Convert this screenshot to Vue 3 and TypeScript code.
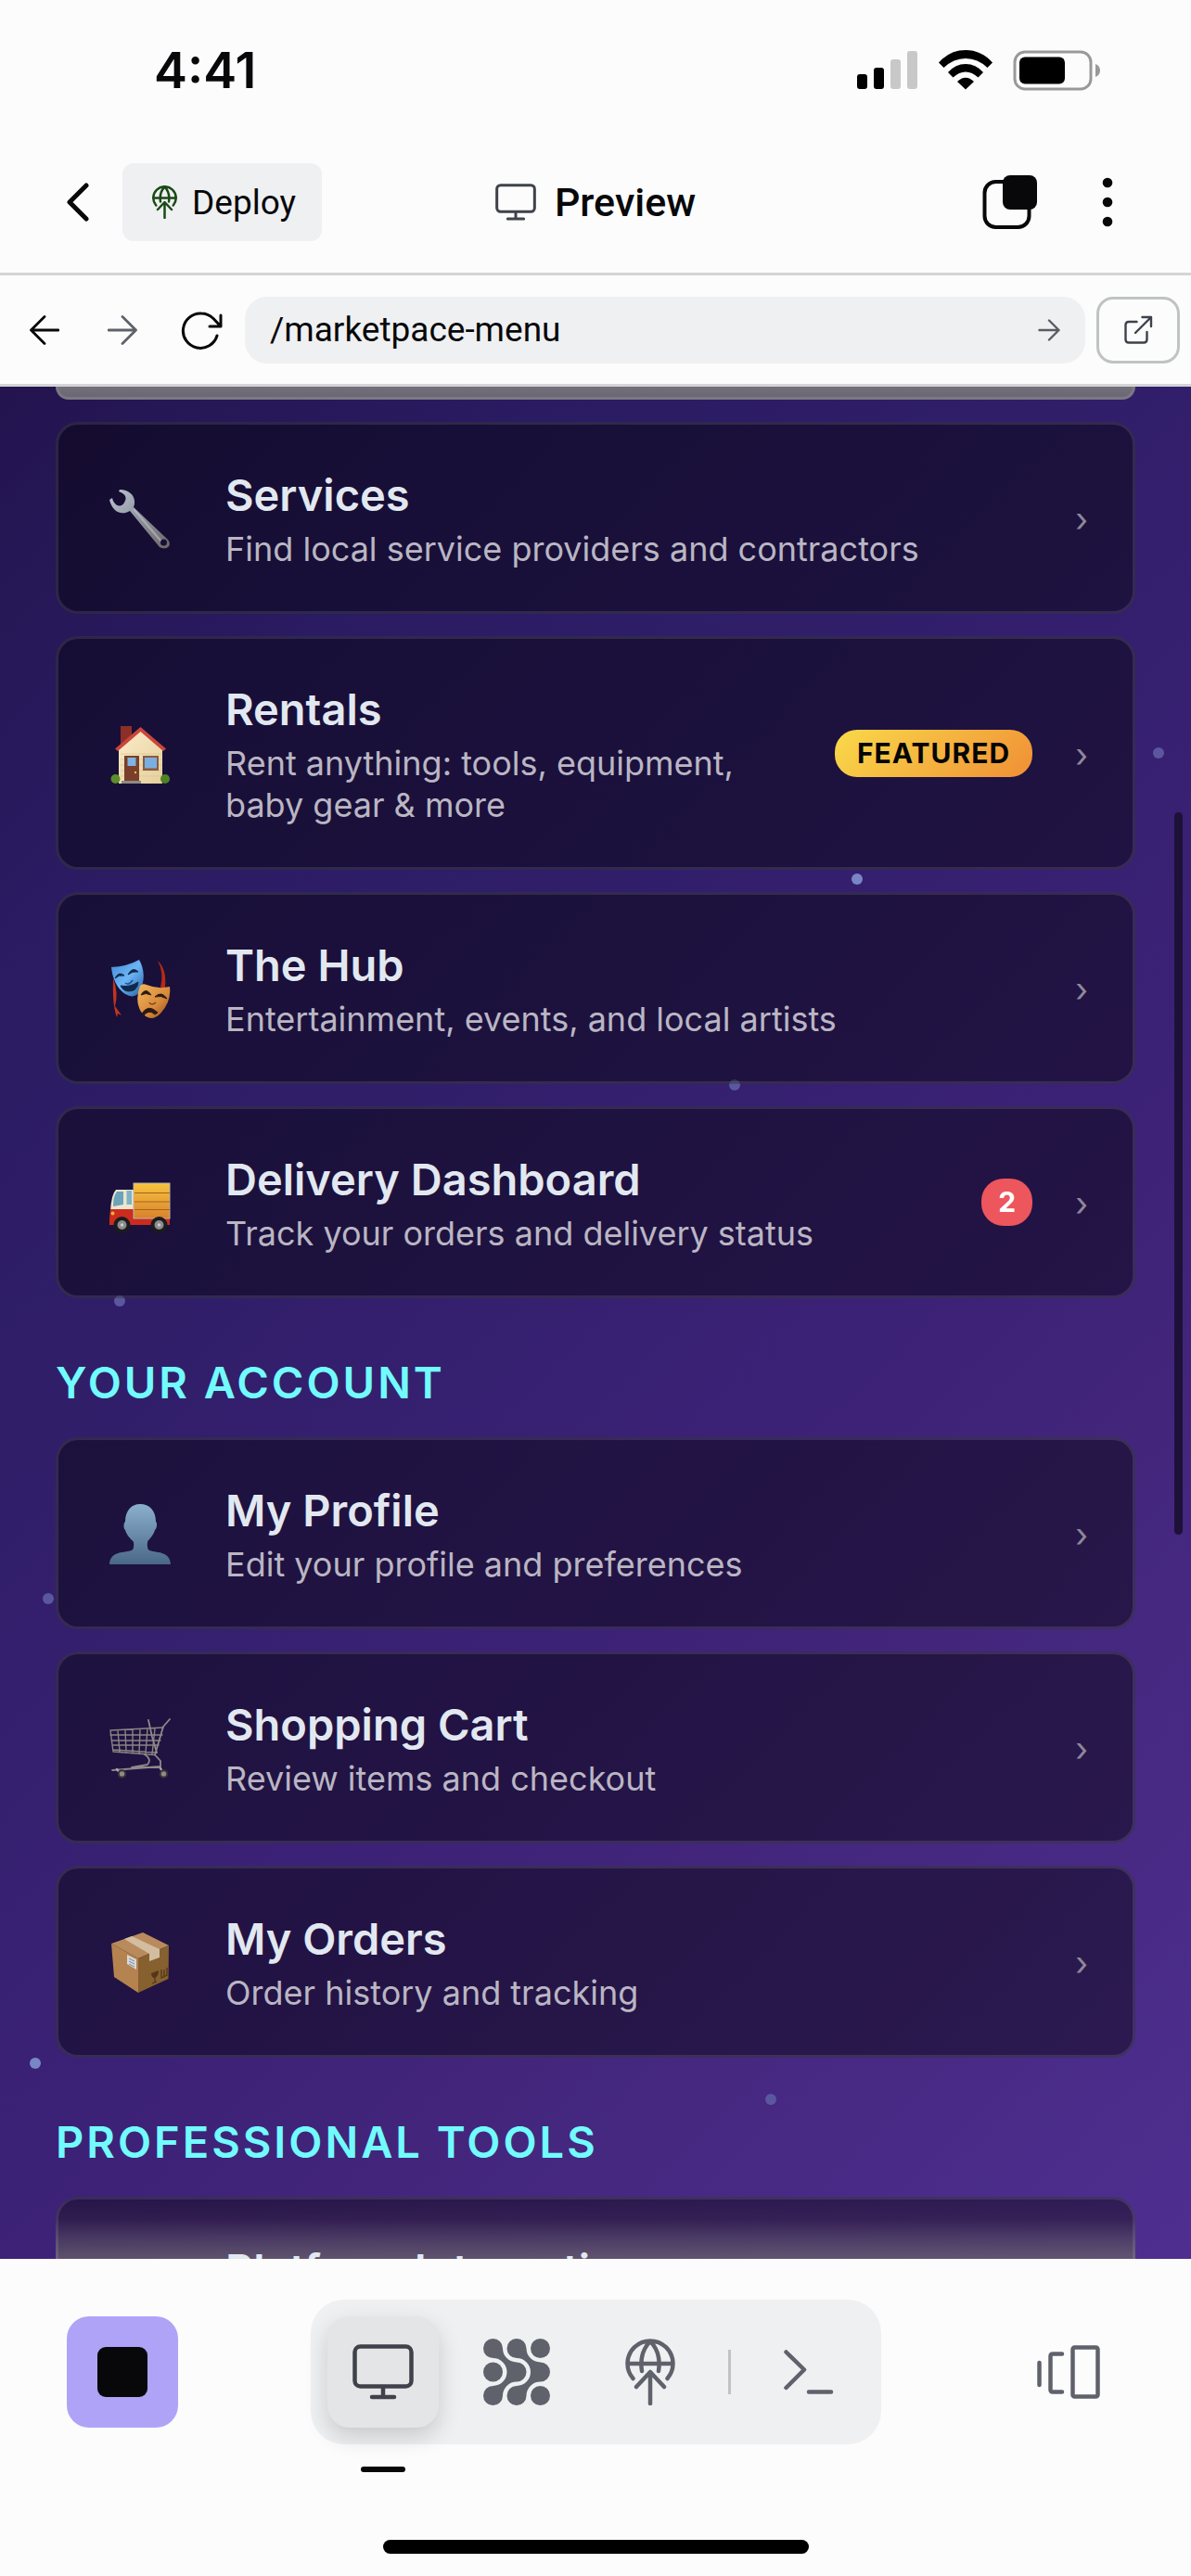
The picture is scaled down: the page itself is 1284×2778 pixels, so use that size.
<script setup lang="ts">
import { ref } from 'vue'

type IconName = 'wrench' | 'house' | 'masks' | 'truck' | 'person' | 'cart' | 'parcel' | 'none'

interface MenuItem {
  icon: IconName
  title: string
  description: string
  badge?: string
  badgeKind?: 'featured' | 'count'
  glow?: boolean
}

interface MenuSection {
  heading?: string
  items: MenuItem[]
}

interface Particle {
  x: number
  y: number
  bright: boolean
}

const path = ref('/marketpace-menu')

const sections: MenuSection[] = [
  {
    items: [
      { icon: 'wrench', title: 'Services', description: 'Find local service providers and contractors' },
      {
        icon: 'house',
        title: 'Rentals',
        description: 'Rent anything: tools, equipment, baby gear & more',
        badge: 'FEATURED',
        badgeKind: 'featured',
      },
      { icon: 'masks', title: 'The Hub', description: 'Entertainment, events, and local artists' },
      {
        icon: 'truck',
        title: 'Delivery Dashboard',
        description: 'Track your orders and delivery status',
        badge: '2',
        badgeKind: 'count',
      },
    ],
  },
  {
    heading: 'Your Account',
    items: [
      { icon: 'person', title: 'My Profile', description: 'Edit your profile and preferences' },
      { icon: 'cart', title: 'Shopping Cart', description: 'Review items and checkout' },
      { icon: 'parcel', title: 'My Orders', description: 'Order history and tracking' },
    ],
  },
  {
    heading: 'Professional Tools',
    items: [{ icon: 'none', title: 'Platform Integrations', description: '', glow: true }],
  },
]

const particles: Particle[] = [
  { x: 1249, y: 395, bright: false },
  { x: 924, y: 531, bright: true },
  { x: 792, y: 753, bright: false },
  { x: 129, y: 986, bright: false },
  { x: 52, y: 1307, bright: false },
  { x: 38, y: 1808, bright: true },
  { x: 831, y: 1847, bright: false },
]
</script>

<template>
  <div class="app">
    <div class="status">
      <span class="time">4:41</span>
      <div class="status-icons">
        <svg width="66" height="44" viewBox="0 0 66 44">
          <rect x="0" y="26" width="11" height="16" rx="3" />
          <rect x="18" y="19" width="11" height="23" rx="3" />
          <rect x="36" y="10" width="11" height="32" rx="3" fill="#c8c8c8" />
          <rect x="54" y="1" width="11" height="41" rx="3" fill="#c8c8c8" />
        </svg>
        <svg width="58" height="44" viewBox="0 0 58 44">
          <path d="M0 13.500Q12 0 29 0T58 13.500L52.500 19Q42 9 29 9T5.500 19Z" />
          <path d="M10 24Q18 15 29 15T48 24L42.500 29.500Q36 23.500 29 23.500T15.500 29.500Z" />
          <path d="M20 34Q29 25.500 38 34L29 42.500Z" />
        </svg>
        <svg width="96" height="44" viewBox="0 0 96 44">
          <rect x="2" y="2" width="82" height="40" rx="11" fill="none" stroke="#999" stroke-width="3" />
          <rect x="7" y="7.500" width="49" height="29" rx="6" />
          <path d="M89 15Q94 17 94 22T89 29Z" fill="#999" />
        </svg>
      </div>
    </div>

    <header class="header">
      <div class="header-left">
        <button class="icon-button back" aria-label="Back">
          <svg width="24" height="42" viewBox="0 0 24 42" fill="none" stroke="#08080a" stroke-width="5" stroke-linecap="round" stroke-linejoin="round">
            <path d="M21 3L3 21L21 39" />
          </svg>
        </button>
        <button class="deploy">
          <svg width="27" height="36" viewBox="0 0 54 72" fill="none" stroke="#1b4a17" stroke-width="5" stroke-linecap="round" stroke-linejoin="round">
            <path d="M8.500 43A24.500 24.500 0 1 1 45.500 43M3 27H51M27 3C19 11 16 22 18 35M27 3C35 11 38 22 36 35M27 70V37M12 52L27 36L42 52" />
          </svg>
          Deploy
        </button>
      </div>
      <h1 class="page-title">
        <svg width="44" height="40" viewBox="0 0 66 60" fill="none" stroke="#3f424b" stroke-width="4.500" stroke-linecap="round">
          <rect x="2.500" y="2.500" width="61" height="43" rx="6" />
          <path d="M33 46V56M20 57H46" />
        </svg>
        Preview
      </h1>
      <div class="header-right">
        <button class="icon-button" aria-label="Tabs">
          <svg width="60" height="60" viewBox="0 0 60 60">
            <rect x="2.500" y="8" width="48" height="49" rx="12" fill="none" stroke="#08080a" stroke-width="4" />
            <rect x="22" y="1" width="37" height="37" rx="8" fill="#08080a" />
          </svg>
        </button>
        <button class="icon-button" aria-label="More">
          <svg width="12" height="54" viewBox="0 0 12 54" fill="#08080a">
            <circle cx="6" cy="6" r="5.300" />
            <circle cx="6" cy="27" r="5.300" />
            <circle cx="6" cy="48" r="5.300" />
          </svg>
        </button>
      </div>
    </header>

    <form class="browser" @submit.prevent>
      <button type="button" class="nav-button" aria-label="Go back">
        <svg width="32" height="32" viewBox="0 0 32 32" fill="none" stroke="#08080a" stroke-width="2.800" stroke-linecap="round" stroke-linejoin="round">
          <path d="M31 16H1.500M16 1.500L1.500 16L16 30.500" />
        </svg>
      </button>
      <button type="button" class="nav-button" aria-label="Go forward">
        <svg width="32" height="32" viewBox="0 0 32 32" fill="none" stroke="#5f626b" stroke-width="2.800" stroke-linecap="round" stroke-linejoin="round">
          <path d="M1 16H30.500M16 1.500L30.500 16L16 30.500" />
        </svg>
      </button>
      <button type="button" class="nav-button" aria-label="Reload">
        <svg width="48" height="48" viewBox="0 0 48 48" fill="none" stroke="#08080a" stroke-width="3" stroke-linecap="round" stroke-linejoin="round">
          <path d="M46 8V20H34M46 20L38 11.500Q32 6 25 6A18.700 18.700 0 1 0 42 30" />
        </svg>
      </button>
      <div class="address">
        <input v-model="path" type="text" aria-label="Page path" />
        <button type="submit" class="go" aria-label="Go">
          <svg width="24" height="24" viewBox="0 0 24 24" fill="none" stroke="#5a5c63" stroke-width="2.400" stroke-linecap="round" stroke-linejoin="round">
            <path d="M1.500 12H22.500M12 1.500L22.500 12L12 22.500" />
          </svg>
        </button>
      </div>
      <button type="button" class="external" aria-label="Open in new tab">
        <svg width="32" height="32" viewBox="0 0 32 32" fill="none" stroke="#3f424b" stroke-width="2.400" stroke-linecap="round" stroke-linejoin="round">
          <path d="M14.500 7H6Q2.500 7 2.500 10.500V26Q2.500 29.500 6 29.500H22Q25.500 29.500 25.500 26V18M20.500 2H30V12M30 2L13 19" />
        </svg>
      </button>
    </form>

    <main class="viewport">
      <span
        v-for="(p, i) in particles"
        :key="i"
        class="particle"
        :class="{ bright: p.bright }"
        :style="{ left: p.x + 'px', top: p.y + 'px' }"
      ></span>
      <div class="content">
        <div class="previous-card"></div>
        <section v-for="(section, s) in sections" :key="s" class="section">
          <h2 v-if="section.heading">{{ section.heading }}</h2>
          <div class="cards">
            <a v-for="item in section.items" :key="item.title" href="#" class="card" :class="{ glow: item.glow }">
              <span class="emoji">
                <svg v-if="item.icon === 'wrench'" width="66" height="66" viewBox="0 -2 66 66">
                  <defs>
                    <linearGradient id="steel" x1="0" y1="0" x2="1" y2="1">
                      <stop offset="0" stop-color="#b9c5d2" />
                      <stop offset=".5" stop-color="#8f929d" />
                      <stop offset="1" stop-color="#6f6568" />
                    </linearGradient>
                  </defs>
                  <path fill="url(#steel)" d="M11 0C23 0 30 9 26 19L63 54C68 60 62 66 54 62L22 23C12 29 3 23 0 11L3 9C5 18 13 20 16 14C19 9 18 5 10 2Z" />
                  <path d="M26 21L56 56" stroke="#bfc4cc" stroke-width="2" opacity=".6" />
                  <circle cx="58.500" cy="57" r="3.500" fill="#170f35" />
                </svg>
                <svg v-else-if="item.icon === 'house'" width="66" height="66" viewBox="0 -4 66 66">
                  <defs>
                    <linearGradient id="wall" x1="0" y1="0" x2="1" y2="1">
                      <stop offset="0" stop-color="#fbeccb" />
                      <stop offset="1" stop-color="#e6cf9c" />
                    </linearGradient>
                  </defs>
                  <rect x="12" y="0" width="12" height="22" fill="#8c2f28" />
                  <path d="M33.500 4L57 25V62H10V25Z" fill="url(#wall)" />
                  <path d="M12 30H56M12 36H56M12 42H56M12 48H56M12 54H56" stroke="#d9c494" stroke-width=".7" />
                  <path d="M6 24.500L33.500 1L61 24.500L58 27L33.500 6L9 27Z" fill="#c9463b" />
                  <rect x="16" y="32" width="16" height="28" fill="#7a3f2a" />
                  <rect x="19.500" y="34" width="9" height="9" fill="#7db4e2" />
                  <circle cx="28" cy="50" r="1.200" fill="#e8c24a" />
                  <rect x="36" y="32" width="17" height="16" fill="#8b5a3e" />
                  <rect x="38" y="34" width="13" height="11.500" fill="#7aaee0" />
                  <rect x="13" y="59" width="21" height="3" fill="#8e8a85" />
                  <circle cx="6.500" cy="57" r="5" fill="#5b8f2b" />
                  <circle cx="60" cy="57" r="5" fill="#4f8224" />
                </svg>
                <svg v-else-if="item.icon === 'masks'" width="66" height="66" viewBox="0 -2 66 66">
                  <defs>
                    <linearGradient id="joy" x1="0" y1="0" x2="1" y2="1">
                      <stop offset="0" stop-color="#3f8ad6" />
                      <stop offset=".5" stop-color="#6cb5f5" />
                      <stop offset="1" stop-color="#2560a8" />
                    </linearGradient>
                    <linearGradient id="sorrow" x1="0" y1="0" x2="1" y2="1">
                      <stop offset="0" stop-color="#f0b65c" />
                      <stop offset=".6" stop-color="#d8893a" />
                      <stop offset="1" stop-color="#8a4a1c" />
                    </linearGradient>
                  </defs>
                  <path d="M4 20Q10 36 6 50L13 60L9 58L8 62Q3 50 4 20Z" fill="#c2331d" />
                  <path d="M52 1Q62 10 60 30H55Q59 14 52 1Z" fill="#b32a18" />
                  <path d="M2 8Q20 7 32 0Q41 16 33 34Q27 43 17 37Q4 28 2 8Z" fill="url(#joy)" />
                  <path d="M6 20Q10 12 16 17Q10 16 6 20ZM20 16Q25 7 31 13Q25 12 20 16ZM12 28Q22 30 31 24Q30 34 21 34Q15 34 12 28Z" fill="#10284a" stroke="#10284a" />
                  <path d="M17 25Q21 28 25 22" fill="none" stroke="#1c4e8c" stroke-width="1.500" />
                  <path d="M33 28Q36 25 40 27Q52 32 65 29Q67 45 55 58Q44 69 34 56Q27 44 33 28Z" fill="url(#sorrow)" />
                  <path d="M34 38Q39 29 45 38Q39 35 34 38ZM49 40Q56 33 62 42Q55 38 49 40ZM35 58Q42 47 52 57L49 59Q43 53 37 60Z" fill="#2b1a14" stroke="#2b1a14" />
                  <path d="M43 46Q45 50 50 46" fill="none" stroke="#7a431b" stroke-width="1.500" />
                </svg>
                <svg v-else-if="item.icon === 'truck'" width="66" height="66" viewBox="0 -2 66 66">
                  <defs>
                    <linearGradient id="cargo" x1="0" y1="0" x2="0" y2="1">
                      <stop offset="0" stop-color="#f8c53f" />
                      <stop offset="1" stop-color="#d9812c" />
                    </linearGradient>
                  </defs>
                  <path d="M7 17H26V40H1Q2 22 7 17Z" fill="#ece5cf" />
                  <path d="M8 19H15V33L4 35Q4 24 8 19Z" fill="#6aa3ba" />
                  <rect x="18.500" y="18" width="5.500" height="15" fill="#7fb3c6" />
                  <path d="M1 38H26V47H65V55H0V48Z" fill="#cc2b1d" />
                  <rect x="26" y="10" width="39" height="38" fill="url(#cargo)" stroke="#b9b5ad" stroke-width="1" />
                  <path d="M27 20.500H65M27 30H65M27 38.500H65" stroke="#a5621f" stroke-width="1.200" />
                  <circle cx="3.500" cy="42.500" r="2" fill="#f2b23c" />
                  <g fill="#1b1b1d">
                    <circle cx="13.500" cy="55" r="9" />
                    <circle cx="53.500" cy="55" r="9" />
                  </g>
                  <g fill="#8c8c8f">
                    <circle cx="13.500" cy="55" r="5" />
                    <circle cx="53.500" cy="55" r="5" />
                  </g>
                  <g fill="#c9c9cb">
                    <circle cx="13.500" cy="55" r="1.800" />
                    <circle cx="53.500" cy="55" r="1.800" />
                  </g>
                </svg>
                <svg v-else-if="item.icon === 'person'" width="66" height="66" viewBox="0 -1 66 66">
                  <defs>
                    <linearGradient id="bust" x1="0" y1="0" x2="0" y2="1">
                      <stop offset="0" stop-color="#8bb0cd" />
                      <stop offset="1" stop-color="#4a6788" />
                    </linearGradient>
                  </defs>
                  <path fill="url(#bust)" d="M33 0C43 0 50 7 50 19C52 20 51 27 49 28C47 35 42 38 41 41Q40 48 43 50C53 53 65 51 66 65H0C1 51 13 53 24 50Q27 48 26 41C24 38 19 35 17 28C15 27 15 20 17 19C17 7 24 0 33 0Z" />
                </svg>
                <svg v-else-if="item.icon === 'cart'" width="66" height="66" viewBox="0 -1 66 66" fill="none" stroke-linejoin="round" stroke-linecap="round">
                  <path d="M1 13L58 10M1 18H57M2 24H55M3 29H53M4 34L51 37M4 36L49 39.500M9 13L11 36M17 12.500L18 36M25 12L25 37M33 12L32 38M41 11L39 38M49 11L46 39M1 13L4 36" stroke="#8a8482" stroke-width="1.400" />
                  <path d="M65 1L58 9L49 39.500L55 46V52L3 56M38 39Q46 44 41 50L24 53H55M42 2L46 20L51 37" stroke="#8f898a" stroke-width="1.800" />
                  <path d="M8 55L13 61M55 54L59 61" stroke="#aaa6a6" stroke-width="2.500" />
                  <circle cx="13.500" cy="60" r="3.800" fill="#8f8a84" stroke="#35303a" stroke-width="2" />
                  <circle cx="58.500" cy="60" r="3.800" fill="#8f8a84" stroke="#35303a" stroke-width="2" />
                </svg>
                <svg v-else-if="item.icon === 'parcel'" width="66" height="66" viewBox="0 -1 66 66">
                  <path d="M36 0L64 14L31 28L2 12Z" fill="#b98a5c" />
                  <path d="M2 12L31 28V65L5 48Z" fill="#b58350" />
                  <path d="M64 14L31 28V65L63.500 50Z" fill="#86602f" />
                  <path d="M16 7L24 4L54 18V27L43 31V23Z" fill="#d3bda0" />
                  <path d="M19 24L29 29V40L19 34Z" fill="#d5dadd" />
                  <path d="M21 28L27 31M21 31L27 34M21 34L27 37" stroke="#7f8a92" stroke-width="1" />
                  <path d="M45 44L53 41Q53 47 49 49Q45 49 45 44Z" fill="#523718" />
                  <path d="M49 48V54M46 55L51 53M56 40V49L62 46V38M59 40V47" fill="none" stroke="#523718" stroke-width="1.300" />
                </svg>
              </span>
              <span class="text">
                <span class="title">{{ item.title }}</span>
                <span class="description">{{ item.description }}</span>
              </span>
              <span v-if="item.badge" class="badge" :class="item.badgeKind">{{ item.badge }}</span>
              <span class="chevron">›</span>
            </a>
          </div>
        </section>
      </div>
      <div class="scrollbar"></div>
    </main>

    <footer class="toolbar">
      <div class="tools">
        <button class="stop" aria-label="Stop">
          <svg width="54" height="54" viewBox="0 0 54 54"><rect width="54" height="54" rx="9" fill="#08080a" /></svg>
        </button>
        <nav class="tabs">
          <button class="tab active" aria-label="Preview">
            <svg width="66" height="60" viewBox="0 0 66 60" fill="none" stroke="#3f424b" stroke-width="4.500" stroke-linecap="round">
              <rect x="2.500" y="2.500" width="61" height="43" rx="6" />
              <path d="M33 46V56M21 57H45" />
            </svg>
          </button>
          <button class="tab" aria-label="Agent">
            <svg width="72" height="72" viewBox="0 0 72 72" fill="#5f626b">
              <path d="M21 10.500A15 15 0 0 0 36 25.500A10.500 10.500 0 0 1 36 46.500A15 15 0 0 0 21 61.500A10.500 10.500 0 1 1 10.500 51A15 15 0 0 0 10.500 21A10.500 10.500 0 1 1 21 10.500Z" />
              <path d="M46.500 10.500A15 15 0 0 0 61.500 25.500A10.500 10.500 0 0 1 61.500 46.500A15 15 0 0 0 46.500 61.500A10.500 10.500 0 1 1 36 51A15 15 0 0 0 36 21A10.500 10.500 0 1 1 46.500 10.500Z" />
              <circle cx="10.500" cy="36" r="10.500" />
              <circle cx="61.500" cy="10.500" r="10.500" />
              <circle cx="61.500" cy="61.500" r="10.500" />
            </svg>
          </button>
          <button class="tab" aria-label="Deploy">
            <svg width="54" height="72" viewBox="0 0 54 72" fill="none" stroke="#5f626b" stroke-width="4.500" stroke-linecap="round" stroke-linejoin="round">
              <path d="M8.500 43A24.500 24.500 0 1 1 45.500 43M3 27H51M27 3C19 11 16 22 18 35M27 3C35 11 38 22 36 35M27 70V37M12 52L27 36L42 52" />
            </svg>
          </button>
          <span class="divider"></span>
          <button class="tab" aria-label="Shell">
            <svg width="54" height="48" viewBox="0 0 54 48" fill="none" stroke="#5f626b" stroke-width="4.500" stroke-linecap="round" stroke-linejoin="round">
              <path d="M2.500 2.500L22 21.500L2.500 41M27 45.500H51" />
            </svg>
          </button>
        </nav>
        <button class="panes" aria-label="Panes">
          <svg width="68" height="58" viewBox="0 0 68 58" fill="none" stroke="#5f626b" stroke-width="4.500" stroke-linecap="round" stroke-linejoin="round">
            <path d="M2.500 19V43M27 9.500H17Q14.500 9.500 14.500 12V48Q14.500 50.500 17 50.500H27" />
            <rect x="38.500" y="2.500" width="27" height="53" rx="2" />
          </svg>
        </button>
      </div>
      <div class="home-indicator"></div>
    </footer>
  </div>
</template>

<style>
body {
  margin: 0;
  background: #fcfcfc;
}
</style>

<style scoped>
.app {
  display: flex;
  flex-direction: column;
  height: 100vh;
  overflow: hidden;
  background: #fcfcfc;
  color: #08080a;
  font-family: Inter, "Liberation Sans", sans-serif;
}

svg {
  display: block;
  flex: none;
}

button {
  display: flex;
  align-items: center;
  justify-content: center;
  padding: 0;
  border: 0;
  background: none;
  color: inherit;
  font: inherit;
}

.status {
  display: flex;
  flex: none;
  align-items: center;
  justify-content: space-between;
  box-sizing: border-box;
  height: 142px;
  padding: 10px 96px 0 166px;
}

.time {
  font-size: 54px;
  font-weight: 600;
  line-height: 60px;
}

.status-icons {
  display: flex;
  gap: 22px;
}

.header {
  display: grid;
  flex: none;
  grid-template-columns: 1fr auto 1fr;
  align-items: center;
  height: 152px;
  padding: 0 72px;
  border-bottom: 3px solid #d3d5d6;
  font-family: Roboto, "Liberation Sans", sans-serif;
}

.header-left,
.header-right {
  display: flex;
  align-items: center;
}

.header-left {
  gap: 36px;
}

.header-right {
  justify-content: flex-end;
  gap: 69px;
  padding-right: 12px;
}

.deploy {
  gap: 16px;
  height: 84px;
  padding: 0 28px 0 32px;
  border-radius: 12px;
  background: #eff0f2;
  font-size: 37px;
}

.page-title {
  display: flex;
  align-items: center;
  gap: 20px;
  margin: 0;
  font-size: 43px;
  font-weight: 500;
}

.browser {
  display: flex;
  flex: none;
  align-items: center;
  height: 117px;
  padding: 0 12px 0 6px;
  border-bottom: 3px solid #d3d5d6;
  font-family: Roboto, "Liberation Sans", sans-serif;
}

.nav-button {
  width: 84px;
  height: 84px;
}

.address {
  display: flex;
  flex: 1;
  align-items: center;
  height: 72px;
  margin: 0 12px 0 6px;
  padding: 0 27px;
  border-radius: 24px;
  background: #eff0f2;
}

.address input {
  flex: 1;
  min-width: 0;
  padding: 0;
  border: 0;
  outline: 0;
  background: none;
  color: inherit;
  font: inherit;
  font-size: 37px;
}

.external {
  box-sizing: border-box;
  width: 90px;
  height: 72px;
  border: 3px solid #bfc3c4;
  border-radius: 18px;
}

.viewport {
  position: relative;
  flex: 1;
  min-height: 0;
  overflow: hidden;
  background: linear-gradient(135deg, #23144f 0%, #2a1b62 18%, #301e69 35%, #3d2278 62%, #43267c 72%, #4e2f90 100%);
}

.particle {
  position: absolute;
  width: 12px;
  height: 12px;
  margin: -6px 0 0 -6px;
  border-radius: 50%;
  background: #5a579f;
}

.particle.bright {
  background: #7986c6;
}

.content {
  position: relative;
  padding: 0 60px;
}

.previous-card {
  box-sizing: border-box;
  height: 14px;
  margin-bottom: 24px;
  border: 3px solid #7b7884;
  border-top: 0;
  border-radius: 0 0 20px 20px;
  background: linear-gradient(#74707a, #6a6674);
}

h2 {
  margin: 62px 0 30px;
  color: #72fbfd;
  font-size: 47px;
  font-weight: 600;
  line-height: 58px;
  letter-spacing: 3px;
  text-transform: uppercase;
}

.cards {
  display: flex;
  flex-direction: column;
  gap: 24px;
}

.card {
  display: flex;
  align-items: center;
  padding: 44px 48px;
  border: 3px solid rgba(255, 255, 255, 0.1);
  border-radius: 24px;
  background: rgba(0, 0, 0, 0.42);
  color: #e2e8f0;
  text-decoration: none;
}

.card.glow {
  background: linear-gradient(
    rgba(0, 0, 0, 0.4) 0,
    rgba(40, 26, 52, 0.6) 24px,
    rgba(76, 66, 88, 0.7) 44px,
    rgba(104, 98, 104, 0.75) 66px,
    rgba(120, 114, 120, 0.8) 100%
  ) border-box;
}

.emoji {
  display: flex;
  flex: none;
  justify-content: center;
  width: 80px;
  margin-right: 52px;
}

.text {
  display: flex;
  flex: 1;
  flex-direction: column;
  gap: 4px;
  min-width: 0;
}

.title {
  font-size: 47px;
  font-weight: 600;
  line-height: 64px;
}

.description {
  min-height: 45px;
  color: #bab6c3;
  font-size: 36px;
  line-height: 45px;
}

.badge {
  margin-left: 48px;
  padding: 0 24px;
  border-radius: 24px;
  font-size: 30px;
  font-weight: 700;
  line-height: 51px;
}

.badge.featured {
  background: linear-gradient(135deg, #f9da4a, #f08f35);
  color: #050505;
  letter-spacing: 1px;
}

.badge.count {
  padding: 0 18px;
  background: #ec565c;
  color: #fff;
}

.chevron {
  margin-left: 46px;
  padding-top: 4px;
  color: #8e889b;
  font-size: 36px;
  line-height: 45px;
}

.scrollbar {
  position: absolute;
  top: 459px;
  right: 9px;
  width: 9px;
  height: 779px;
  border-radius: 5px;
  background: #1d1138;
}

.toolbar {
  display: flex;
  flex: none;
  flex-direction: column;
  align-items: center;
  justify-content: space-between;
  box-sizing: border-box;
  height: 342px;
  padding: 44px 0 24px;
}

.tools {
  display: flex;
  align-items: center;
  justify-content: space-between;
  box-sizing: border-box;
  width: 100%;
  padding: 0 72px;
}

.stop,
.tab,
.panes {
  width: 120px;
  height: 120px;
  border-radius: 24px;
}

.stop {
  background: #afa3f8;
}

.tabs {
  display: flex;
  align-items: center;
  gap: 24px;
  padding: 18px;
  border-radius: 36px;
  background: #eff0f2;
}

.tab.active {
  position: relative;
  background: #e4e5e7;
  box-shadow: 0 10px 24px rgba(0, 0, 0, 0.16);
}

.tab.active::after {
  position: absolute;
  bottom: -48px;
  left: 36px;
  width: 48px;
  height: 6px;
  border-radius: 3px;
  background: #08080a;
  content: "";
}

.divider {
  width: 3px;
  height: 48px;
  background: #c0c2c4;
}

.home-indicator {
  width: 459px;
  height: 15px;
  border-radius: 8px;
  background: #000;
}
</style>
